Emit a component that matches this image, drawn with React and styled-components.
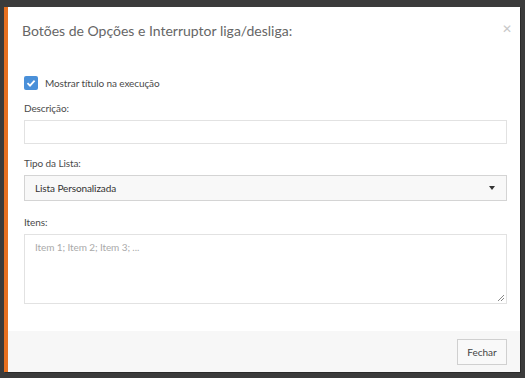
import React from 'react';
import styled, { createGlobalStyle } from 'styled-components';

const GlobalStyle = createGlobalStyle`
  html, body { margin: 0; padding: 0; }
  body {
    background: #3b3b3b;
    width: 525px;
    height: 378px;
    overflow: hidden;
    font-family: Lato, "Open Sans", sans-serif;
  }
`;

const Backdrop = styled.div`
  padding: 7px 5px 6px 4px;
  box-sizing: border-box;
  height: 378px;
`;

const Modal = styled.div`
  background: #fff;
  border-left: 4px solid #e8701f;
  box-shadow: 1px 1px 0 #2a2a2a;
  height: 100%;
  display: flex;
  flex-direction: column;
  box-sizing: border-box;
`;

const Header = styled.div`
  display: flex;
  align-items: flex-start;
  justify-content: space-between;
  padding: 15px 8px 0 14px;
  height: 53px;
  box-sizing: border-box;
`;

const Title = styled.h4`
  margin: 0;
  font-weight: 400;
  font-size: 14px;
  line-height: 18px;
  color: #666;
`;

const Close = styled.span`
  color: #c8c8c8;
  font-size: 12px;
  line-height: 1;
  margin-top: 1px;
`;

const Body = styled.div`
  flex: 1;
  padding: 16px 13px 0 16px;
  display: flex;
  flex-direction: column;
  font-size: 10px;
  letter-spacing: -0.1px;
`;

const CheckRow = styled.label`
  display: flex;
  align-items: center;
  gap: 7px;
  line-height: 14px;
  color: #4a4a4a;
  margin-bottom: 11px;
`;

const CheckBox = styled.span`
  width: 14px;
  height: 14px;
  border-radius: 2px;
  background: #4a90d9;
  display: flex;
  align-items: center;
  justify-content: center;
`;

const Label = styled.div`
  line-height: 14px;
  color: #4a4a4a;
  margin-bottom: 5px;
`;

const Input = styled.div`
  height: 24px;
  border: 1px solid #e2e2e2;
  box-sizing: border-box;
  margin-bottom: 12px;
`;

const Select = styled.div`
  height: 26px;
  border: 1px solid #d4d4d4;
  background: #f8f8f8;
  box-sizing: border-box;
  display: flex;
  align-items: center;
  justify-content: space-between;
  padding: 0 11px 0 10px;
  color: #333;
  margin-bottom: 14px;
`;

const Caret = styled.span`
  width: 0;
  height: 0;
  border-left: 3.5px solid transparent;
  border-right: 3.5px solid transparent;
  border-top: 4px solid #333;
`;

const TextArea = styled.div`
  position: relative;
  height: 70px;
  border: 1px solid #e2e2e2;
  box-sizing: border-box;
  padding: 6px 10px;
  color: #aaa;
`;

const Grip = styled.svg`
  position: absolute;
  right: 1px;
  bottom: 1px;
`;

const Footer = styled.div`
  background: #f7f7f7;
  height: 41px;
  display: flex;
  align-items: center;
  justify-content: flex-end;
  padding: 0 13px;
`;

const Button = styled.button`
  font-family: inherit;
  font-size: 10px;
  color: #444;
  background: #f9f9f9;
  border: 1px solid #d0d0d0;
  width: 50px;
  height: 26px;
  padding: 0;
`;

export default function App() {
  return (
    <>
      <GlobalStyle />
      <Backdrop>
        <Modal>
          <Header>
            <Title>Botões de Opções e Interruptor liga/desliga:</Title>
            <Close>✕</Close>
          </Header>
          <Body>
            <CheckRow>
              <CheckBox>
                <svg width="10" height="10" viewBox="0 0 10 10">
                  <path d="M1.5 5.2 L4 7.6 L8.6 2.6" fill="none" stroke="#fff" strokeWidth="1.8" />
                </svg>
              </CheckBox>
              Mostrar título na execução
            </CheckRow>
            <Label>Descrição:</Label>
            <Input />
            <Label>Tipo da Lista:</Label>
            <Select>
              Lista Personalizada
              <Caret />
            </Select>
            <Label>Itens:</Label>
            <TextArea>
              Item 1; Item 2; Item 3; ...
              <Grip width="9" height="9" viewBox="0 0 9 9">
                <path d="M8 2 L2 8 M8 5 L5 8" stroke="#888" strokeWidth="1" />
              </Grip>
            </TextArea>
          </Body>
          <Footer>
            <Button>Fechar</Button>
          </Footer>
        </Modal>
      </Backdrop>
    </>
  );
}
